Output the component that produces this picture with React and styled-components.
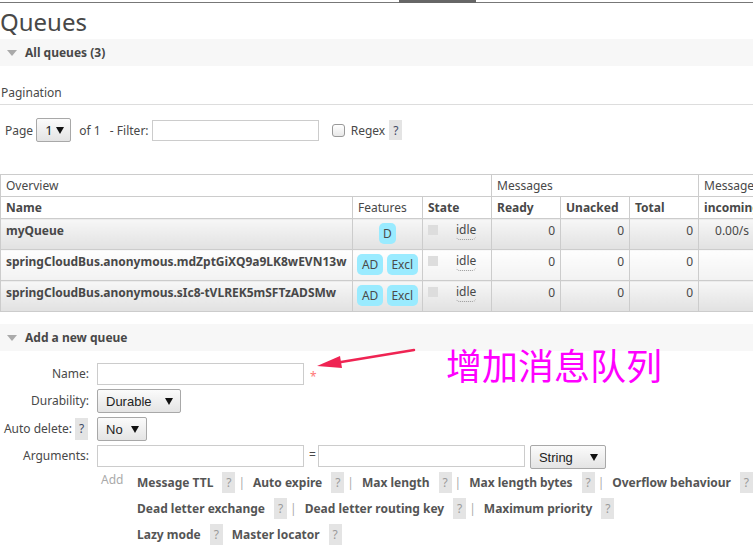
import React from "react";
import styled, { createGlobalStyle } from "styled-components";

const GlobalStyle = createGlobalStyle`
  html, body {
    margin: 0;
    padding: 0;
    overflow: hidden;
    background: #fff;
  }
  body {
    font-family: "Noto Sans", "Open Sans", sans-serif;
    font-size: 12px;
    color: #484848;
  }
`;

const Page = styled.div`
  position: relative;
  width: 753px;
  height: 551px;
  overflow: hidden;
`;

const Nav = styled.div`
  height: 2px;
  border-bottom: 1px solid #777;
  display: flex;
`;

const NavTab = styled.div`
  margin-left: 399px;
  width: 77px;
  height: 3px;
  background: #666;
`;

const Title = styled.h1`
  margin: 2px 0 0 0;
  font-size: 24px;
  font-weight: normal;
  line-height: 34px;
`;

const SectionBar = styled.div`
  height: 27px;
  background: #f7f7f7;
  display: flex;
  align-items: center;
  padding-left: 7px;
  margin-top: ${(p) => p.$top || 0}px;
  h2 {
    margin: 0 0 0 8px;
    font-size: 12px;
    font-weight: bold;
  }
`;

const Caret = styled.span`
  width: 0;
  height: 0;
  border-left: 5px solid transparent;
  border-right: 5px solid transparent;
  border-top: 6px solid #aaa;
`;

const SubHeading = styled.h3`
  margin: 19px 0 0 0;
  padding: 0 1px 3px;
  font-size: 12px;
  font-weight: normal;
  line-height: 16px;
  border-bottom: 1px solid #ddd;
`;

const PageRow = styled.div`
  display: flex;
  align-items: center;
  height: 24px;
  margin-top: 13px;
  padding-left: 5px;
  white-space: pre;
`;

const FakeSelect = styled.div`
  display: inline-flex;
  align-items: center;
  justify-content: space-between;
  box-sizing: border-box;
  flex: none;
  width: ${(p) => p.$w}px;
  height: ${(p) => p.$h || 24}px;
  padding: 0 7px 0 8px;
  border: 1px solid #a8a8a8;
  border-radius: 2px;
  background: linear-gradient(#fbfbfb, #e4e4e4);
  font-family: ${(p) => (p.$sans ? '"Noto Sans", sans-serif' : '"Liberation Sans", Arial, sans-serif')};
  font-size: 13px;
  color: #222;
  margin: ${(p) => p.$m || "0"};
  svg {
    flex: none;
  }
`;

const Arrow = () => (
  <svg width="8" height="7" viewBox="0 0 8 7">
    <path d="M0 0 H8 L4 7 Z" fill="#111" />
  </svg>
);

const TextInput = styled.div`
  box-sizing: border-box;
  flex: none;
  width: ${(p) => p.$w}px;
  height: ${(p) => p.$h || 22}px;
  border: 1px solid #ccc;
  background: #fff;
  margin: ${(p) => p.$m || "0"};
`;

const Check = styled.span`
  box-sizing: border-box;
  width: 13px;
  height: 13px;
  border: 1px solid #999;
  border-radius: 3px;
  background: linear-gradient(#fff, #e8e8e8);
  margin: 0 6px 0 13px;
`;

const Help = styled.span`
  display: inline-flex;
  align-items: center;
  justify-content: center;
  flex: none;
  width: 13px;
  height: ${(p) => p.$h || 21}px;
  background: #e4e4e4;
  color: ${(p) => (p.$muted ? "#9a9a9a" : "#3e4a66")};
  font-size: 12px;
  margin: ${(p) => p.$m || "0"};
`;

const Grid = styled.table`
  margin-top: 32px;
  border-collapse: collapse;
  table-layout: fixed;
  width: 754px;
  th,
  td {
    border: 1px solid #ccc;
    padding: 0 5px;
    text-align: left;
    overflow: hidden;
    white-space: nowrap;
  }
  thead th {
    height: 21px;
    background: #fff;
  }
  thead tr.group th {
    font-weight: normal;
  }
`;

const Row = styled.tr`
  td {
    height: 31px;
    vertical-align: top;
    padding-top: 4px;
    padding-bottom: 0;
    box-sizing: border-box;
    background: ${(p) =>
      p.$alt
        ? "linear-gradient(#f7f7f7, #e1e1e1)"
        : "linear-gradient(#fefefe, #f2f2f2)"};
  }
`;

const NameCell = styled.td`
  font-weight: bold;
  line-height: 16px;
`;

const NumCell = styled.td`
  && {
    text-align: right;
    line-height: 16px;
  }
`;

const FeatCell = styled.td`
  && {
    text-align: center;
    padding: 4px 0 0;
  }
`;

const Badge = styled.span`
  display: inline-block;
  padding: 0 4.5px;
  margin: 0 2px;
  line-height: 21px;
  border-radius: 5px;
  background: #9aebff;
  color: #4a4a4a;
`;

const StateCell = styled.td`
  && {
    padding-top: 6px;
  }
  div {
    display: flex;
    align-items: flex-start;
  }
`;

const StateDot = styled.span`
  width: 10px;
  height: 10px;
  background: #ddd;
  margin-right: 18px;
`;

const Idle = styled.span`
  line-height: 14px;
  margin-top: -2px;
  padding-bottom: 2px;
  border-bottom: 1px dotted #999;
  border-radius: 0 0 4px 4px;
`;

const Form = styled.div`
  display: grid;
  grid-template-columns: 89px auto;
  column-gap: 8px;
  row-gap: 4px;
  align-items: center;
  padding-top: 11px;
`;

const Label = styled.label`
  display: flex;
  justify-content: flex-end;
  align-items: center;
  line-height: 16px;
`;

const Field = styled.div`
  display: flex;
  align-items: center;
`;

const Star = styled.span`
  color: #f77;
  margin: 6px 0 0 6px;
`;

const Equals = styled.span`
  margin: -4px 2px 0 5px;
`;

const AddArea = styled.div`
  display: flex;
  margin: 5px 0 0 97px;
`;

const AddText = styled.span`
  flex: none;
  width: 36px;
  padding: 0 0 0 4px;
  color: #aaa;
  line-height: 16px;
`;

const LinkRows = styled.div`
  display: flex;
  flex-direction: column;
  gap: 5px;
`;

const LinkRow = styled.div`
  display: flex;
  align-items: center;
  height: 21px;
`;

const ArgLink = styled.span`
  font-weight: bold;
  color: #555;
  margin-right: 9px;
  white-space: nowrap;
`;

const Sep = styled.span`
  color: #aaa;
  margin: 0 8px 0 3px;
`;

const Gap = styled.span`
  width: 9px;
`;

const Overlay = styled.svg`
  position: absolute;
  left: 0;
  top: 0;
  pointer-events: none;
`;

const Note = styled.div`
  position: absolute;
  left: 446px;
  top: 346px;
  font-family: "Noto Sans CJK SC", sans-serif;
  font-size: 36px;
  line-height: 36px;
  color: #ff00ff;
  white-space: nowrap;
`;

const queues = [
  { name: "myQueue", features: ["D"], rate: "0.00/s" },
  { name: "springCloudBus.anonymous.mdZptGiXQ9a9LK8wEVN13w", features: ["AD", "Excl"], rate: "" },
  { name: "springCloudBus.anonymous.sIc8-tVLREK5mSFTzADSMw", features: ["AD", "Excl"], rate: "" },
];

const argRows = [
  { sep: true, items: ["Message TTL", "Auto expire", "Max length", "Max length bytes", "Overflow behaviour"] },
  { sep: true, items: ["Dead letter exchange", "Dead letter routing key", "Maximum priority"] },
  { sep: false, items: ["Lazy mode", "Master locator"] },
];

export default function App() {
  return (
    <Page>
      <GlobalStyle />
      <Nav>
        <NavTab />
      </Nav>
      <Title>Queues</Title>
      <SectionBar>
        <Caret />
        <h2>All queues (3)</h2>
      </SectionBar>
      <SubHeading>Pagination</SubHeading>
      <PageRow>
        <span>Page</span>
        <FakeSelect $w={35} $h={24} $sans $m="0 8px 0 3px">
          1 <Arrow />
        </FakeSelect>
        <span>of 1   - Filter: </span>
        <TextInput $w={167} $h={21} />
        <Check />
        <span>Regex </span>
        <Help $m="0 0 0 1px" $h={20}>?</Help>
      </PageRow>

      <Grid>
        <colgroup>
          <col style={{ width: 352 }} />
          <col style={{ width: 70 }} />
          <col style={{ width: 69 }} />
          <col style={{ width: 69 }} />
          <col style={{ width: 69 }} />
          <col style={{ width: 69 }} />
          <col style={{ width: 56 }} />
        </colgroup>
        <thead>
          <tr className="group">
            <th colSpan={3}>Overview</th>
            <th colSpan={3}>Messages</th>
            <th>Message rates</th>
          </tr>
          <tr>
            <th>Name</th>
            <th style={{ fontWeight: "normal" }}>Features</th>
            <th>State</th>
            <th>Ready</th>
            <th>Unacked</th>
            <th>Total</th>
            <th>incoming</th>
          </tr>
        </thead>
        <tbody>
          {queues.map((q, i) => (
            <Row key={q.name} $alt={i % 2 === 0}>
              <NameCell>{q.name}</NameCell>
              <FeatCell>
                {q.features.map((f) => (
                  <Badge key={f}>{f}</Badge>
                ))}
              </FeatCell>
              <StateCell>
                <div>
                  <StateDot />
                  <Idle>idle</Idle>
                </div>
              </StateCell>
              <NumCell>0</NumCell>
              <NumCell>0</NumCell>
              <NumCell>0</NumCell>
              <NumCell>{q.rate}</NumCell>
            </Row>
          ))}
        </tbody>
      </Grid>

      <SectionBar $top={12}>
        <Caret />
        <h2>Add a new queue</h2>
      </SectionBar>

      <Form>
        <Label>Name:</Label>
        <Field>
          <TextInput $w={207} />
          <Star>*</Star>
        </Field>

        <Label>Durability:</Label>
        <Field>
          <FakeSelect $w={84}>
            Durable <Arrow />
          </FakeSelect>
        </Field>

        <Label>
          Auto delete:
          <Help $m="0 1px 0 3px" $h={22}>?</Help>
        </Label>
        <Field>
          <FakeSelect $w={50}>
            No <Arrow />
          </FakeSelect>
        </Field>

        <Label>Arguments:</Label>
        <Field>
          <TextInput $w={207} />
          <Equals>=</Equals>
          <TextInput $w={207} />
          <FakeSelect $w={76} $m="0 0 -2px 5px">
            String <Arrow />
          </FakeSelect>
        </Field>
      </Form>

      <AddArea>
        <AddText>Add</AddText>
        <LinkRows>
          {argRows.map((row, r) => (
            <LinkRow key={r}>
              {row.items.map((a, k) => (
                <React.Fragment key={a}>
                  <ArgLink>{a}</ArgLink>
                  <Help $muted>?</Help>
                  {k < row.items.length - 1 && (row.sep ? <Sep>|</Sep> : <Gap />)}
                </React.Fragment>
              ))}
            </LinkRow>
          ))}
        </LinkRows>
      </AddArea>

      <Overlay width="753" height="551" viewBox="0 0 753 551">
        <line x1="414" y1="350" x2="335" y2="363" stroke="#ef2453" strokeWidth="2.5" strokeLinecap="round" />
        <polygon points="317,366 340,356 342,368" fill="#ef2453" />
      </Overlay>
      <Note>增加消息队列</Note>
    </Page>
  );
}
